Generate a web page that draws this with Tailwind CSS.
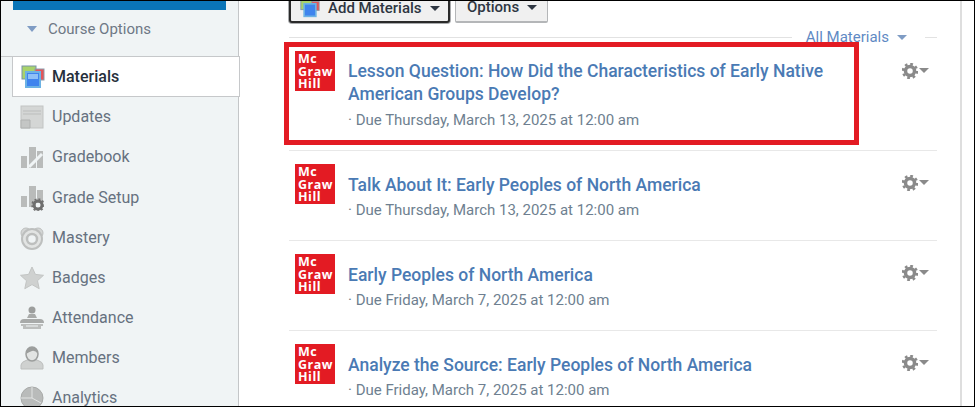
<!DOCTYPE html>
<html lang="en">

<head>
  <meta charset="UTF-8">
  <meta name="viewport" content="width=device-width, initial-scale=1.0">
  <title>Materials</title>
  <script src="https://cdn.jsdelivr.net/npm/@tailwindcss/browser@4"></script>
</head>

<body class="bg-white">

  <div class="relative flex w-[975px] h-[407px] overflow-hidden bg-white border border-black font-['Roboto',sans-serif]">

    <!-- Sidebar -->
    <aside class="w-[238px] h-full shrink-0 bg-[#f0f4f5] border-r border-[#c4c6c8] text-[16px] text-[#66717f]">
      <div class="ml-3 w-[213px] h-[9px] bg-[#0a75b8]"></div>
      <div class="flex items-center h-[38px] pl-[26px] gap-[11px] text-[15px] text-[#6e7885]">
        <span class="w-0 h-0 border-x-[5px] border-x-transparent border-t-[6px] border-t-[#7f9cc4]"></span>
        <span>Course Options</span>
      </div>
      <div class="h-[9px] border-b border-[#c6c8ca]"></div>

      <div class="flex items-center h-[41px] -mt-px ml-[11px] w-[228px] pl-2 gap-[7px] bg-white border border-[#c6c8ca] text-[#26303c] font-medium">
        <svg class="w-6 h-[24px]" viewBox="0 0 24 24">
          <rect x="1" y="1" width="14" height="13" fill="#a9d36b" stroke="#7b93a8" />
          <rect x="14" y="4" width="9" height="11" fill="#e4565a" stroke="#8b9bab" />
          <rect x="5" y="7" width="14" height="15" fill="#3f84ee" stroke="#6cb2e4" stroke-width="2" />
          <rect x="7" y="9" width="10" height="5" fill="#8fc0f7" />
        </svg>
        <span>Materials</span>
      </div>

      <div class="flex items-center h-10 pl-[19px] gap-2">
        <svg class="w-6 h-6" viewBox="0 0 24 24">
          <rect x="1" y="1" width="22" height="22" fill="#d4d6d5" stroke="#c2c4c3" />
          <path d="M3 6h18M3 9h18" stroke="#bbbdbc" />
          <path d="M1 15h9v8H1z" fill="#c4c6c5" stroke="#b0b2b1" />
        </svg>
        <span>Updates</span>
      </div>
      <div class="flex items-center h-10 pl-[19px] gap-2">
        <svg class="w-6 h-6" viewBox="0 0 24 24">
          <path d="M1 11h6v12H1zM9 2h7v21H9zM17 6h6v17h-6z" fill="#b9bbba" />
          <path d="M9 22l13-13" stroke="#f0f4f5" stroke-width="3" />
        </svg>
        <span>Gradebook</span>
      </div>
      <div class="flex items-center h-[41px] pl-[19px] gap-2">
        <svg class="w-6 h-[26px]" viewBox="0 0 24 26">
          <path d="M1 11h6v11H1zM9 1h7v21H9zM17 5h6v13h-6z" fill="#b9bbba" />
          <circle cx="18" cy="20" r="4" fill="none" stroke="#6e6e6e" stroke-width="3" />
          <circle cx="18" cy="20" r="6" fill="none" stroke="#6e6e6e" stroke-width="1.5" stroke-dasharray="2 2" />
        </svg>
        <span>Grade Setup</span>
      </div>
      <div class="flex items-center h-10 pl-[19px] gap-2">
        <svg class="w-6 h-6" viewBox="0 0 24 24">
          <circle cx="6" cy="7" r="5" fill="#d4d6d5" stroke="#bdbfbe" />
          <circle cx="18" cy="7" r="5" fill="#d4d6d5" stroke="#bdbfbe" />
          <circle cx="12" cy="13" r="10" fill="#e2e4e3" stroke="#bdbfbe" stroke-width="2" />
          <circle cx="12" cy="13" r="5" fill="#f0f4f5" stroke="#bdbfbe" stroke-width="2.5" />
        </svg>
        <span>Mastery</span>
      </div>
      <div class="flex items-center h-10 pl-[19px] gap-2">
        <svg class="w-6 h-6" viewBox="0 0 24 24">
          <path d="M12 1l3.4 7.4 8.1.9-6 5.4 1.7 8L12 18.6 4.800 22.700l1.700-8-6-5.400 8.100-.9z" fill="#cfd1d0" stroke="#c2c4c3" />
        </svg>
        <span>Badges</span>
      </div>
      <div class="flex items-center h-10 pl-[19px] gap-2">
        <svg class="w-6 h-6" viewBox="0 0 24 24">
          <circle cx="12" cy="4" r="3.500" fill="#9c9e9d" />
          <path d="M7 12l2-4h6l2 4z" fill="#a8aaa9" />
          <path d="M0 17q0-4 4-4h16q4 0 4 4z" fill="#a8aaa9" />
          <path d="M1 18h22v2h-2v3H3v-3H1z" fill="#bcbebd" />
          <path d="M6 20h12" stroke="#f0f4f5" />
        </svg>
        <span>Attendance</span>
      </div>
      <div class="flex items-center h-10 pl-[19px] gap-2">
        <svg class="w-6 h-6" viewBox="0 0 24 24">
          <path d="M1 23v-4q0-3 6-5h10q6 2 6 5v4z" fill="#cfd1d0" stroke="#bdbfbe" />
          <ellipse cx="12" cy="8" rx="6" ry="7" fill="#e2e4e3" stroke="#9c9e9d" stroke-width="1.500" />
          <path d="M6 8q1-7 6-7t6 7q-3-4-6-3t-6 3z" fill="#9c9e9d" />
        </svg>
        <span>Members</span>
      </div>
      <div class="flex items-center h-10 pl-[19px] gap-2">
        <svg class="w-6 h-6" viewBox="0 0 24 24">
          <circle cx="12" cy="12" r="11" fill="#b9bbba" stroke="#a8aaa9" />
          <path d="M12 1v11l9 5M12 12H1" stroke="#e2e4e3" fill="none" />
        </svg>
        <span>Analytics</span>
      </div>
    </aside>

    <!-- Main column -->
    <main class="w-[648px] ml-[50px] shrink-0 text-[#4a7ab4]">
      <div class="flex gap-[5px] h-[22px] items-end text-[15px] font-medium text-[#2e3642]">
        <button class="flex items-center w-[161px] h-[30px] pl-[9px] gap-[8px] bg-[#f0f0f0] border-2 border-[#2a2a2a] rounded-[3px] shadow-[0_0_0_1px_#a9abad]">
          <svg class="w-5 h-5" viewBox="0 0 24 24">
            <rect x="1" y="1" width="14" height="13" fill="#a9d36b" stroke="#7b93a8" />
            <rect x="14" y="4" width="9" height="11" fill="#e4565a" stroke="#8b9bab" />
            <rect x="5" y="7" width="14" height="15" fill="#3f84ee" stroke="#6cb2e4" stroke-width="2" />
          </svg>
          <span>Add Materials</span>
          <span class="w-0 h-0 border-x-[5px] border-x-transparent border-t-[5px] border-t-[#2e3642]"></span>
        </button>
        <button class="flex items-center w-[93px] h-[30px] pl-[11px] gap-[8px] bg-[#f0f0f0] border border-[#b4b6b8] border-b-2 rounded-[2px]">
          <span>Options</span>
          <span class="w-0 h-0 border-x-[5px] border-x-transparent border-t-[5px] border-t-[#2e3642]"></span>
        </button>
      </div>

      <div class="flex items-center h-[28px]">
        <div class="flex-1 h-px bg-[#e2e2e2]"></div>
        <div class="flex items-center gap-2 pl-[14px] pr-[18px] text-[15px] text-[#5f8ac4] h-[28px]">
          <span>All Materials</span>
          <span class="w-0 h-0 border-x-[5px] border-x-transparent border-t-[5px] border-t-[#7f9cc4]"></span>
        </div>
        <div class="w-[12px] h-px bg-[#e2e2e2]"></div>
      </div>

      <div class="flex h-[100px] pl-[6px] pr-[8px] border-b border-[#e8e8e8]">
        <div class="w-10 h-10 bg-[#e31b23] text-white text-[12.500px] leading-[12.500px] font-bold tracking-[.5px] pt-[2px] pl-[3px] shrink-0 font-['Open_Sans',sans-serif]">Mc<br>Graw<br>Hill</div>
        <div class="ml-[13px] flex-1 pt-[9px]">
          <a class="block text-[17.500px] leading-[23px] font-medium">Lesson Question: How Did the Characteristics of Early Native<br>American Groups Develop?</a>
          <div class="mt-[3px] text-[15px] text-[#6e7f90]">· Due Thursday, March 13, 2025 at 12:00 am</div>
        </div>
        <div class="flex items-start gap-[1px] pt-[12px]">
          <svg class="w-4 h-4" viewBox="0 0 16 16"><circle cx="8" cy="8" r="4.500" fill="none" stroke="#8a8a8a" stroke-width="3.500" /><circle cx="8" cy="8" r="7" fill="none" stroke="#8a8a8a" stroke-width="2.500" stroke-dasharray="2.700 2.800" /></svg>
          <span class="mt-[5px] w-0 h-0 border-x-[5px] border-x-transparent border-t-[5px] border-t-[#8a8a8a]"></span>
        </div>
      </div>

      <div class="flex h-[90px] pl-[6px] pr-[8px] pt-[13px] border-b border-[#e8e8e8]">
        <div class="w-10 h-10 bg-[#e31b23] text-white text-[12.500px] leading-[12.500px] font-bold tracking-[.5px] pt-[2px] pl-[3px] shrink-0 font-['Open_Sans',sans-serif]">Mc<br>Graw<br>Hill</div>
        <div class="ml-[13px] flex-1 pt-[9px]">
          <a class="block text-[17.500px] leading-[24px] font-medium">Talk About It: Early Peoples of North America</a>
          <div class="mt-[2px] text-[15px] text-[#6e7f90]">· Due Thursday, March 13, 2025 at 12:00 am</div>
        </div>
        <div class="flex items-start gap-[1px] pt-[11px]">
          <svg class="w-4 h-4" viewBox="0 0 16 16"><circle cx="8" cy="8" r="4.500" fill="none" stroke="#8a8a8a" stroke-width="3.500" /><circle cx="8" cy="8" r="7" fill="none" stroke="#8a8a8a" stroke-width="2.500" stroke-dasharray="2.700 2.800" /></svg>
          <span class="mt-[5px] w-0 h-0 border-x-[5px] border-x-transparent border-t-[5px] border-t-[#8a8a8a]"></span>
        </div>
      </div>

      <div class="flex h-[90px] pl-[6px] pr-[8px] pt-[13px] border-b border-[#e8e8e8]">
        <div class="w-10 h-10 bg-[#e31b23] text-white text-[12.500px] leading-[12.500px] font-bold tracking-[.5px] pt-[2px] pl-[3px] shrink-0 font-['Open_Sans',sans-serif]">Mc<br>Graw<br>Hill</div>
        <div class="ml-[13px] flex-1 pt-[9px]">
          <a class="block text-[17.500px] leading-[24px] font-medium">Early Peoples of North America</a>
          <div class="mt-[2px] text-[15px] text-[#6e7f90]">· Due Friday, March 7, 2025 at 12:00 am</div>
        </div>
        <div class="flex items-start gap-[1px] pt-[11px]">
          <svg class="w-4 h-4" viewBox="0 0 16 16"><circle cx="8" cy="8" r="4.500" fill="none" stroke="#8a8a8a" stroke-width="3.500" /><circle cx="8" cy="8" r="7" fill="none" stroke="#8a8a8a" stroke-width="2.500" stroke-dasharray="2.700 2.800" /></svg>
          <span class="mt-[5px] w-0 h-0 border-x-[5px] border-x-transparent border-t-[5px] border-t-[#8a8a8a]"></span>
        </div>
      </div>

      <div class="flex h-[90px] pl-[6px] pr-[8px] pt-[13px]">
        <div class="w-10 h-10 bg-[#e31b23] text-white text-[12.500px] leading-[12.500px] font-bold tracking-[.5px] pt-[2px] pl-[3px] shrink-0 font-['Open_Sans',sans-serif]">Mc<br>Graw<br>Hill</div>
        <div class="ml-[13px] flex-1 pt-[9px]">
          <a class="block text-[17.500px] leading-[24px] font-medium">Analyze the Source: Early Peoples of North America</a>
          <div class="mt-[2px] text-[15px] text-[#6e7f90]">· Due Friday, March 7, 2025 at 12:00 am</div>
        </div>
        <div class="flex items-start gap-[1px] pt-[11px]">
          <svg class="w-4 h-4" viewBox="0 0 16 16"><circle cx="8" cy="8" r="4.500" fill="none" stroke="#8a8a8a" stroke-width="3.500" /><circle cx="8" cy="8" r="7" fill="none" stroke="#8a8a8a" stroke-width="2.500" stroke-dasharray="2.700 2.800" /></svg>
          <span class="mt-[5px] w-0 h-0 border-x-[5px] border-x-transparent border-t-[5px] border-t-[#8a8a8a]"></span>
        </div>
      </div>
    </main>

    <div class="ml-[23px] w-[2px] h-full bg-[#dedede]"></div>

    <!-- red annotation box over the first row -->
    <div class="absolute left-[283px] top-[41px] w-[575px] h-[103px] border-[5px] border-[#e31b23]"></div>
  </div>

</body>

</html>
